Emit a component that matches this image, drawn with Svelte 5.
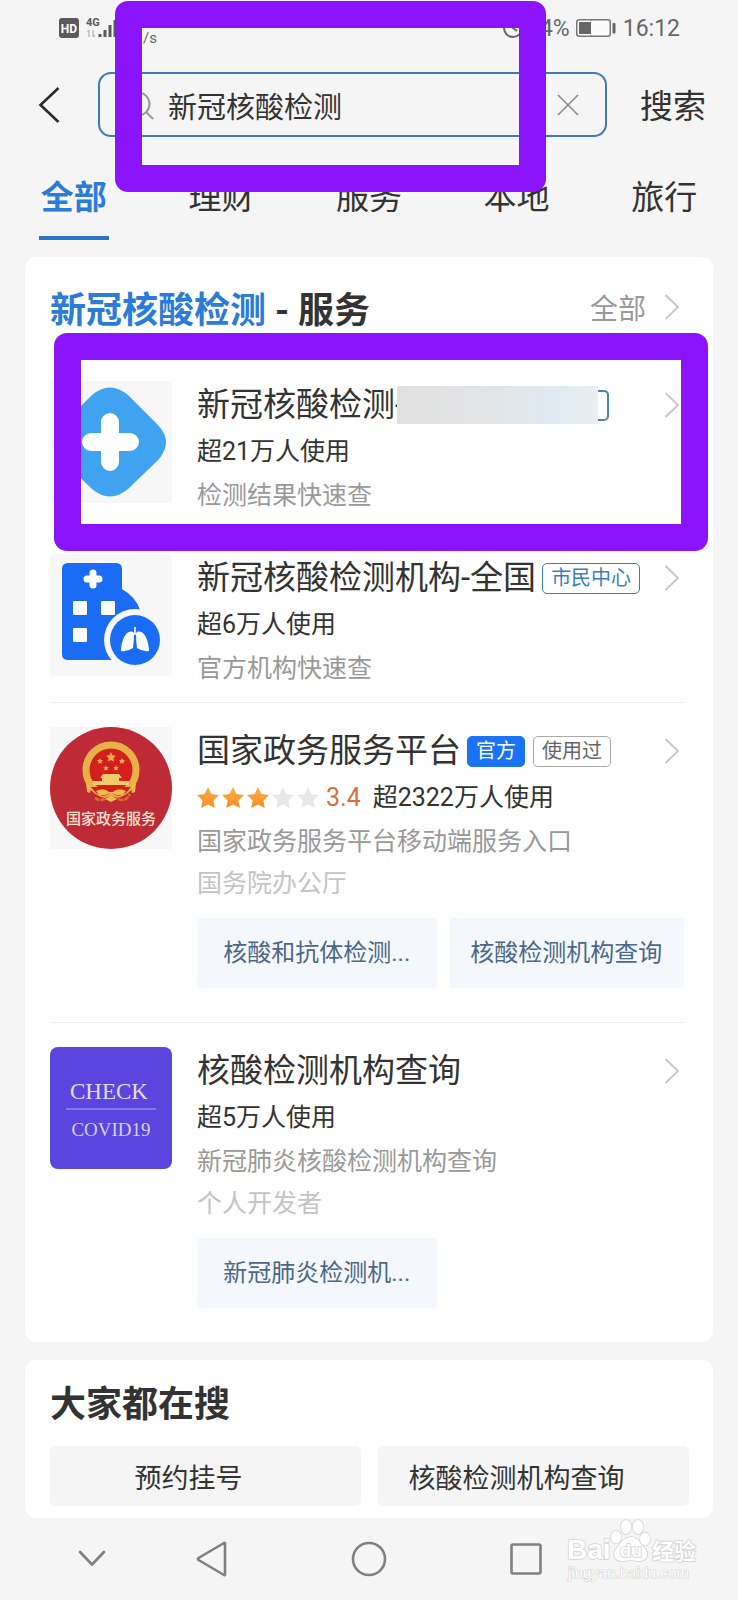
<script>
  const tabs = ['全部', '理财', '服务', '本地', '旅行'];
  let active = $state('全部');
  let query = $state('新冠核酸检测');

  const results = [
    {
      icon: 'cross',
      title: '新冠核酸检测-',
      masked: true,
      marked: true,
      users: '超21万人使用',
      desc: '检测结果快速查'
    },
    {
      icon: 'hospital',
      title: '新冠核酸检测机构-全国',
      tags: [{ text: '市民中心', kind: 'outline' }],
      users: '超6万人使用',
      desc: '官方机构快速查'
    },
    {
      icon: 'emblem',
      title: '国家政务服务平台',
      tags: [
        { text: '官方', kind: 'solid' },
        { text: '使用过', kind: 'grey' }
      ],
      rating: '3.4',
      stars: 3,
      users: '超2322万人使用',
      desc: '国家政务服务平台移动端服务入口',
      org: '国务院办公厅',
      links: ['核酸和抗体检测...', '核酸检测机构查询']
    },
    {
      icon: 'check',
      title: '核酸检测机构查询',
      users: '超5万人使用',
      desc: '新冠肺炎核酸检测机构查询',
      org: '个人开发者',
      links: ['新冠肺炎检测机...']
    }
  ];

  const trending = ['预约挂号', '核酸检测机构查询'];
  const star = 'M0 -11 L3.4 -4 L11 -3 L5.4 2.4 L6.8 10 L0 6.4 L-6.8 10 L-5.4 2.4 L-11 -3 L-3.4 -4Z';
</script>

{#snippet chevron()}
  <svg class="chevron" viewBox="0 0 16 26" aria-hidden="true">
    <path d="M1.5 1 L14 13 L1.5 25" fill="none" stroke="#c8c8c8" stroke-width="2" />
  </svg>
{/snippet}

<div class="page">
  <div class="status">
    <svg class="hd" viewBox="0 0 20 20" role="img" aria-label="HD">
      <rect width="20" height="20" rx="3" fill="#5a5a5a" />
      <text x="10" y="14.5" text-anchor="middle" font-family="Roboto, sans-serif" font-size="12" font-weight="700" fill="#fff">HD</text>
    </svg>
    <svg class="signal" viewBox="0 0 40 22" role="img" aria-label="4G">
      <text x="0" y="9" font-family="Roboto, sans-serif" font-size="11" font-weight="700" fill="#5a5a5a">4G</text>
      <path d="M3 13 V20 M1.5 14.5 L3 13 M7 13 V20 M7 20 L9 18" stroke="#bbb" stroke-width="1.4" fill="none" />
      <path d="M14 17 V20 M19 13 V20 M24 8 V20 M29 3 V20" stroke="#5a5a5a" stroke-width="3" />
    </svg>
    <span class="speed">/s</span>
    <span class="spacer"></span>
    <svg class="alarm" viewBox="0 0 22 22" aria-hidden="true">
      <circle cx="11" cy="11" r="9" fill="none" stroke="#666" stroke-width="2" />
      <path d="M11 5 V11 L15 14" fill="none" stroke="#666" stroke-width="2" />
    </svg>
    <span class="level">4%</span>
    <svg class="battery" viewBox="0 0 40 18" aria-hidden="true">
      <rect x="0.75" y="0.75" width="33.5" height="16.5" rx="2.5" fill="#fafafa" stroke="#777" stroke-width="1.5" />
      <rect x="3" y="3" width="12" height="12" fill="#666" />
      <rect x="36.5" y="4" width="3" height="10.5" rx="1" fill="#666" />
    </svg>
    <time>16:12</time>
  </div>

  <form class="searchbar" onsubmit={(e) => e.preventDefault()}>
    <button class="back" type="button" aria-label="返回">
      <svg viewBox="0 0 22 36"><path d="M20.5 1 L2.5 18 L20.5 35" fill="none" stroke="#2b2b2b" stroke-width="2.6" /></svg>
    </button>
    <div class="field">
      <svg class="lens" viewBox="0 0 30 30" aria-hidden="true">
        <circle cx="14" cy="14" r="11.5" fill="none" stroke="#999" stroke-width="2" />
        <path d="M22 22 L29 29" stroke="#999" stroke-width="2" />
      </svg>
      <input type="text" aria-label="搜索" bind:value={query} />
      <button class="clear" type="button" aria-label="清除" onclick={() => (query = '')}>
        <svg viewBox="0 0 22 22"><path d="M1 1 L21 21 M21 1 L1 21" stroke="#8c8c8c" stroke-width="1.6" /></svg>
      </button>
    </div>
    <button class="submit" type="submit">搜索</button>
  </form>

  <nav class="tabs">
    {#each tabs as tab}
      <button type="button" class:active={active === tab} onclick={() => (active = tab)}><span>{tab}</span></button>
    {/each}
  </nav>

  <section class="card results">
    <header>
      <h2><em>新冠核酸检测</em> - 服务</h2>
      <a class="all" href="#all">全部 {@render chevron()}</a>
    </header>

    {#each results as item}
      <article class="item">
        <div class="icon">
          {#if item.icon === 'cross'}
            <svg viewBox="0 0 122 122">
              <rect width="122" height="122" fill="#f7f7f8" />
              <path d="M42 14 Q60 -1 78 14 L108 44 Q124 61 108 79 L78 108 Q60 123 42 108 L12 79 Q-4 61 12 44Z" fill="#3fa3ef" />
              <path d="M60 41 V81 M41 61 H80" stroke="#fff" stroke-width="18" stroke-linecap="round" />
            </svg>
          {:else if item.icon === 'hospital'}
            <svg viewBox="0 0 122 122">
              <rect width="122" height="122" rx="4" fill="#f7f7f8" />
              <path d="M18 9 H66 Q72 9 72 15 V35 Q86 43 90 56 L84 106 H18 Q12 106 12 100 V15 Q12 9 18 9Z" fill="#1b6cf5" />
              <path d="M43 19 V31 M37 25 H49" stroke="#fff" stroke-width="7" stroke-linecap="round" />
              <rect x="23" y="47" width="14" height="14" rx="1" fill="#fff" />
              <rect x="51" y="47" width="14" height="14" rx="1" fill="#fff" />
              <rect x="23" y="74" width="14" height="14" rx="1" fill="#fff" />
              <circle cx="85" cy="86" r="31" fill="#f7f7f8" />
              <circle cx="85" cy="86" r="25" fill="#1b6cf5" />
              <path d="M85 73 V81" stroke="#fff" stroke-width="1.6" />
              <path d="M83 78 C76 75 71 87 71 97 Q77 98 83 94 Q84 88 84 79Z M87 78 C94 75 99 87 99 97 Q93 98 87 94 Q86 88 86 79Z" fill="#fff" />
            </svg>
          {:else if item.icon === 'emblem'}
            <svg viewBox="0 0 122 122">
              <rect width="122" height="122" fill="#f7f7f8" />
              <circle cx="61" cy="61" r="61" fill="#be2a35" />
              <circle cx="61" cy="43" r="25" fill="#d3201c" stroke="#e9b04a" stroke-width="7" />
              <g fill="#f3a94f">
                <path d={star} transform="translate(61 30) scale(.45)" />
                <path d={star} transform="translate(50 34) scale(.28)" />
                <path d={star} transform="translate(72 34) scale(.28)" />
                <path d={star} transform="translate(56 41) scale(.26)" />
                <path d={star} transform="translate(66 41) scale(.26)" />
              </g>
              <path d="M53 47 H69 L72 51 H69 V54 H79 V58 H43 V54 H52 V51 H50Z" fill="#f4cb69" />
              <path d="M41 60 H81 L76 66 Q68 72 61 65 Q54 72 46 66Z" fill="#d3201c" />
              <path d="M36 56 L41 59 L40 66 L37 65Z M86 56 L81 59 L82 66 L85 65Z M46 64 Q54 60 59 65 H63 Q68 60 76 64 L73 68 H67 L61 66 L55 68 H49Z" fill="#f0b84f" />
              <path d="M45 71 Q50 75 56 71 H66 Q72 75 77 71 L80 67" fill="none" stroke="#df6836" stroke-width="2.5" stroke-dasharray="5 1" />
              <path d="M55 72 L61 69 L67 72 L61 75Z" fill="#f0b84f" />
              <text x="61" y="97" text-anchor="middle" font-family="'Noto Sans CJK SC', sans-serif" font-size="15" font-weight="500" fill="#fbe3d2">国家政务服务</text>
            </svg>
          {:else}
            <svg viewBox="0 0 122 122">
              <rect width="122" height="122" rx="8" fill="#5b45de" />
              <text x="59" y="52" text-anchor="middle" font-family="'Liberation Serif', serif" font-size="23" fill="#e2ddfb">CHECK</text>
              <path d="M16 62 H106" stroke="#b5a9f2" stroke-width="1" />
              <text x="61" y="89" text-anchor="middle" font-family="'Liberation Serif', serif" font-size="19" fill="#d5cefa">COVID19</text>
            </svg>
          {/if}
        </div>

        <div class="body">
          <div class="title">
            <h3>{item.title}</h3>
            {#if item.masked}
              <span class="mask"></span><span class="stub"></span>
            {/if}
            {#each item.tags ?? [] as tag}
              <span class="tag {tag.kind}">{tag.text}</span>
            {/each}
            {@render chevron()}
          </div>
          <p class="users">
            {#if item.rating}
              <svg class="stars" viewBox="0 0 122 22" aria-hidden="true">
                <defs>
                  <linearGradient id="gold" x1="0" y1="0" x2="0" y2="1">
                    <stop offset="0" stop-color="#f5b04a" />
                    <stop offset="1" stop-color="#fb8a24" />
                  </linearGradient>
                </defs>
                {#each [0, 1, 2, 3, 4] as i}
                  <path d={star} transform="translate({11 + i * 25} 11)" fill={i < item.stars ? 'url(#gold)' : '#e8e8e8'} />
                {/each}
              </svg>
              <b>{item.rating}</b>
            {/if}
            {item.users}
          </p>
          <p class="desc">{item.desc}</p>
          {#if item.org}<p class="org">{item.org}</p>{/if}
          {#if item.links}
            <div class="links">
              {#each item.links as link}<a href="#link">{link}</a>{/each}
            </div>
          {/if}
        </div>
        {#if item.marked}<div class="marker row-marker"></div>{/if}
      </article>
    {/each}
  </section>

  <section class="card trending">
    <h2>大家都在搜</h2>
    <div class="grid">
      {#each trending as word}<button type="button">{word}</button>{/each}
    </div>
  </section>

  <nav class="system">
    <button type="button" class="hide" aria-label="收起">
      <svg width="28" height="18" viewBox="0 0 28 18"><path d="M2 2 L14 14.5 L26 2" /></svg>
    </button>
    <button type="button" aria-label="返回">
      <svg width="32" height="36" viewBox="0 0 32 36"><path d="M29 2.5 V33.5 Q29 34.5 28 34 L2.5 19 Q1.5 18 2.5 17 L28 2 Q29 1.5 29 2.5Z" /></svg>
    </button>
    <button type="button" aria-label="主页">
      <svg width="36" height="36" viewBox="0 0 36 36"><circle cx="18" cy="18" r="16" /></svg>
    </button>
    <button type="button" aria-label="最近任务">
      <svg width="32" height="32" viewBox="0 0 32 32"><rect x="1.5" y="1.5" width="29" height="29" rx="1.5" /></svg>
    </button>
  </nav>

  <svg class="watermark" viewBox="0 0 136 66" role="img" aria-label="Baidu 经验">
    <g fill="#fff" stroke="#d4d4d4" stroke-width="1.6" paint-order="stroke" font-family="'Liberation Sans', 'Noto Sans CJK SC', sans-serif" font-weight="700">
      <text x="1" y="41" font-size="28">Bai</text>
      <ellipse cx="50" cy="19" rx="5" ry="6.5" />
      <ellipse cx="60" cy="9" rx="5" ry="7" />
      <ellipse cx="72" cy="9" rx="5" ry="7" />
      <ellipse cx="79" cy="21" rx="5" ry="6.5" />
      <path d="M65 19 C72 19 74 26 79 31 C84 37 80 44 72 43 C67 42 62 42 57 43 C49 44 46 37 50 31 C55 26 57 19 65 19Z" />
      <text x="54" y="39" font-size="18">du</text>
      <text x="86" y="41" font-size="22">经验</text>
      <text x="2" y="60" font-size="15" font-weight="400" stroke-width="1.2">jingyan.baidu.com</text>
    </g>
  </svg>

  <div class="marker search-marker"></div>
</div>

<style>
  :global(body) {
    margin: 0;
    background: #f5f5f5;
  }
  .page {
    position: relative;
    overflow: hidden;
    background: #f5f5f5;
    color: #333;
    font-family: Roboto, 'Noto Sans CJK SC', sans-serif;
  }
  .page :global(*) {
    box-sizing: border-box;
  }
  button {
    padding: 0;
    border: 0;
    background: none;
    color: inherit;
    font: inherit;
    white-space: nowrap;
  }
  svg {
    display: block;
    flex: none;
  }
  h2,
  h3,
  p {
    margin: 0;
  }
  a {
    color: inherit;
    text-decoration: none;
  }

  .status {
    display: flex;
    align-items: center;
    height: 56px;
    margin-bottom: 16px;
    padding: 0 58px 0 59px;
    color: #666;
    font-size: 23px;
  }
  .hd {
    width: 20px;
    height: 20px;
  }
  .signal {
    width: 40px;
    height: 22px;
    margin-left: 7px;
  }
  .speed {
    margin-left: 17px;
    padding-top: 20px;
    font-size: 15px;
    line-height: 16px;
  }
  .spacer {
    flex: 1;
  }
  .alarm {
    width: 22px;
    height: 22px;
    margin-right: 16px;
  }
  .battery {
    width: 40px;
    height: 18px;
    margin: 0 7px 0 6px;
  }

  .searchbar {
    display: flex;
    align-items: center;
    padding: 0 32px 0 38px;
  }
  .back svg {
    width: 22px;
    height: 36px;
  }
  .field {
    display: flex;
    flex: 1;
    align-items: center;
    min-width: 0;
    height: 65px;
    margin: 0 33px 0 38px;
    padding: 0 26px 0 24px;
    border: 2px solid #3c7cb4;
    border-radius: 13px;
  }
  .lens {
    width: 30px;
    height: 30px;
  }
  .field input {
    flex: 1;
    min-width: 0;
    margin: 0 14px;
    padding: 0;
    border: 0;
    outline: 0;
    background: none;
    color: #333;
    font: inherit;
    font-size: 29px;
  }
  .clear svg {
    width: 22px;
    height: 22px;
  }
  .submit {
    padding-top: 4px;
    font-size: 33px;
    line-height: 48px;
  }

  .tabs {
    display: grid;
    grid-template-columns: repeat(5, 1fr);
    padding-top: 23px;
    margin-bottom: 17px;
  }
  .tabs button {
    display: flex;
    justify-content: center;
    font-size: 33px;
    line-height: 76px;
  }
  .tabs span {
    padding: 0 2px;
    border-bottom: 4px solid transparent;
  }
  .tabs .active span {
    border-color: #2b76c8;
    color: #2b7bd8;
    font-weight: 700;
  }

  .card {
    margin: 0 25px;
    padding: 0 29px 0 25px;
    border-radius: 11px;
    background: #fff;
  }
  .card h2 {
    font-size: 36px;
    font-weight: 700;
    white-space: nowrap;
  }
  .results header {
    display: flex;
    align-items: center;
    justify-content: space-between;
    height: 99px;
    padding-right: 4px;
  }
  em {
    color: #2b7bd8;
    font-style: normal;
  }
  .all {
    display: flex;
    align-items: center;
    gap: 18px;
    color: #999;
    font-size: 28px;
  }
  .chevron {
    width: 16px;
    height: 26px;
  }

  .item {
    position: relative;
    display: grid;
    grid-template-columns: 122px 1fr;
    column-gap: 25px;
    padding: 24px 0 13px;
    border-top: 1px solid #f0f0f0;
  }
  header + .item,
  header + .item + .item {
    border-color: transparent;
  }
  .icon svg {
    width: 122px;
    height: 122px;
  }
  .body {
    min-width: 0;
  }
  .title {
    display: flex;
    align-items: center;
    height: 48px;
    padding-right: 4px;
  }
  .title h3 {
    margin-right: 6px;
    font-size: 33px;
    font-weight: 400;
    line-height: 46px;
    white-space: nowrap;
  }
  .title .chevron {
    margin-left: auto;
  }
  .mask {
    z-index: 1;
    width: 201px;
    height: 38px;
    margin-left: -13px;
    background: linear-gradient(90deg, #e0e0e0, #e3e4e5 40%, #dfeaf2 80%, #eceef0);
  }
  .stub {
    width: 11px;
    height: 31px;
    border: 2px solid #4b87a8;
    border-left: 0;
    border-radius: 0 5px 5px 0;
  }
  .tag {
    height: 31px;
    margin-right: 8px;
    padding: 0 8px;
    border: 1px solid;
    border-radius: 5px;
    font-size: 20px;
    line-height: 29px;
    white-space: nowrap;
  }
  .outline {
    color: #3a7fb5;
  }
  .solid {
    border-color: #1a72f5;
    background: #1a72f5;
    color: #fff;
  }
  .grey {
    border-color: #aaa;
    color: #666;
  }
  .users,
  .desc,
  .org {
    font-size: 25px;
    line-height: 43px;
    white-space: nowrap;
  }
  .users {
    display: flex;
    align-items: center;
    height: 45px;
  }
  .stars {
    width: 122px;
    height: 22px;
  }
  .users b {
    margin: 0 12px 0 7px;
    color: #d9703a;
    font-weight: 400;
  }
  .desc {
    color: #999;
  }
  .org {
    color: #c4c4c4;
  }
  .item .org {
    line-height: 42px;
  }
  .icon + .body > .desc:last-child {
    height: 42px;
  }
  .links {
    display: grid;
    grid-template-columns: 239fr 235fr;
    gap: 12px;
    margin: 13px 0 21px;
  }
  .links a {
    overflow: hidden;
    border-radius: 4px;
    background: #f4f8fc;
    color: #4c6888;
    font-size: 24px;
    line-height: 70px;
    text-align: center;
    white-space: nowrap;
  }

  .trending {
    margin-top: 18px;
    padding: 4px 24px 12px 25px;
  }
  .trending h2 {
    line-height: 82px;
  }
  .grid {
    display: grid;
    grid-template-columns: 1fr 1fr;
    gap: 17px;
  }
  .grid button {
    height: 60px;
    padding-right: 34px;
    border-radius: 5px;
    background: #f5f5f5;
    font-size: 27px;
  }

  .system {
    display: grid;
    grid-template-columns: 133fr 157fr 157fr 157fr 134fr;
    height: 82px;
  }
  .system button {
    display: flex;
    align-items: center;
    justify-content: center;
  }
  .system .hide {
    padding-left: 50px;
  }
  .system svg {
    fill: none;
    stroke: #808080;
    stroke-width: 2.6;
    stroke-linecap: round;
    stroke-linejoin: round;
  }

  .watermark {
    position: absolute;
    right: 36px;
    bottom: 16px;
    width: 136px;
    height: 66px;
  }
  .marker {
    position: absolute;
    z-index: 2;
    border: 27px solid #8c14fc;
    border-radius: 13px;
    pointer-events: none;
  }
  .search-marker {
    top: 1px;
    left: 115px;
    width: 431px;
    height: 191px;
  }
  .row-marker {
    top: -24px;
    right: -24px;
    bottom: -22px;
    left: 4px;
  }
</style>
